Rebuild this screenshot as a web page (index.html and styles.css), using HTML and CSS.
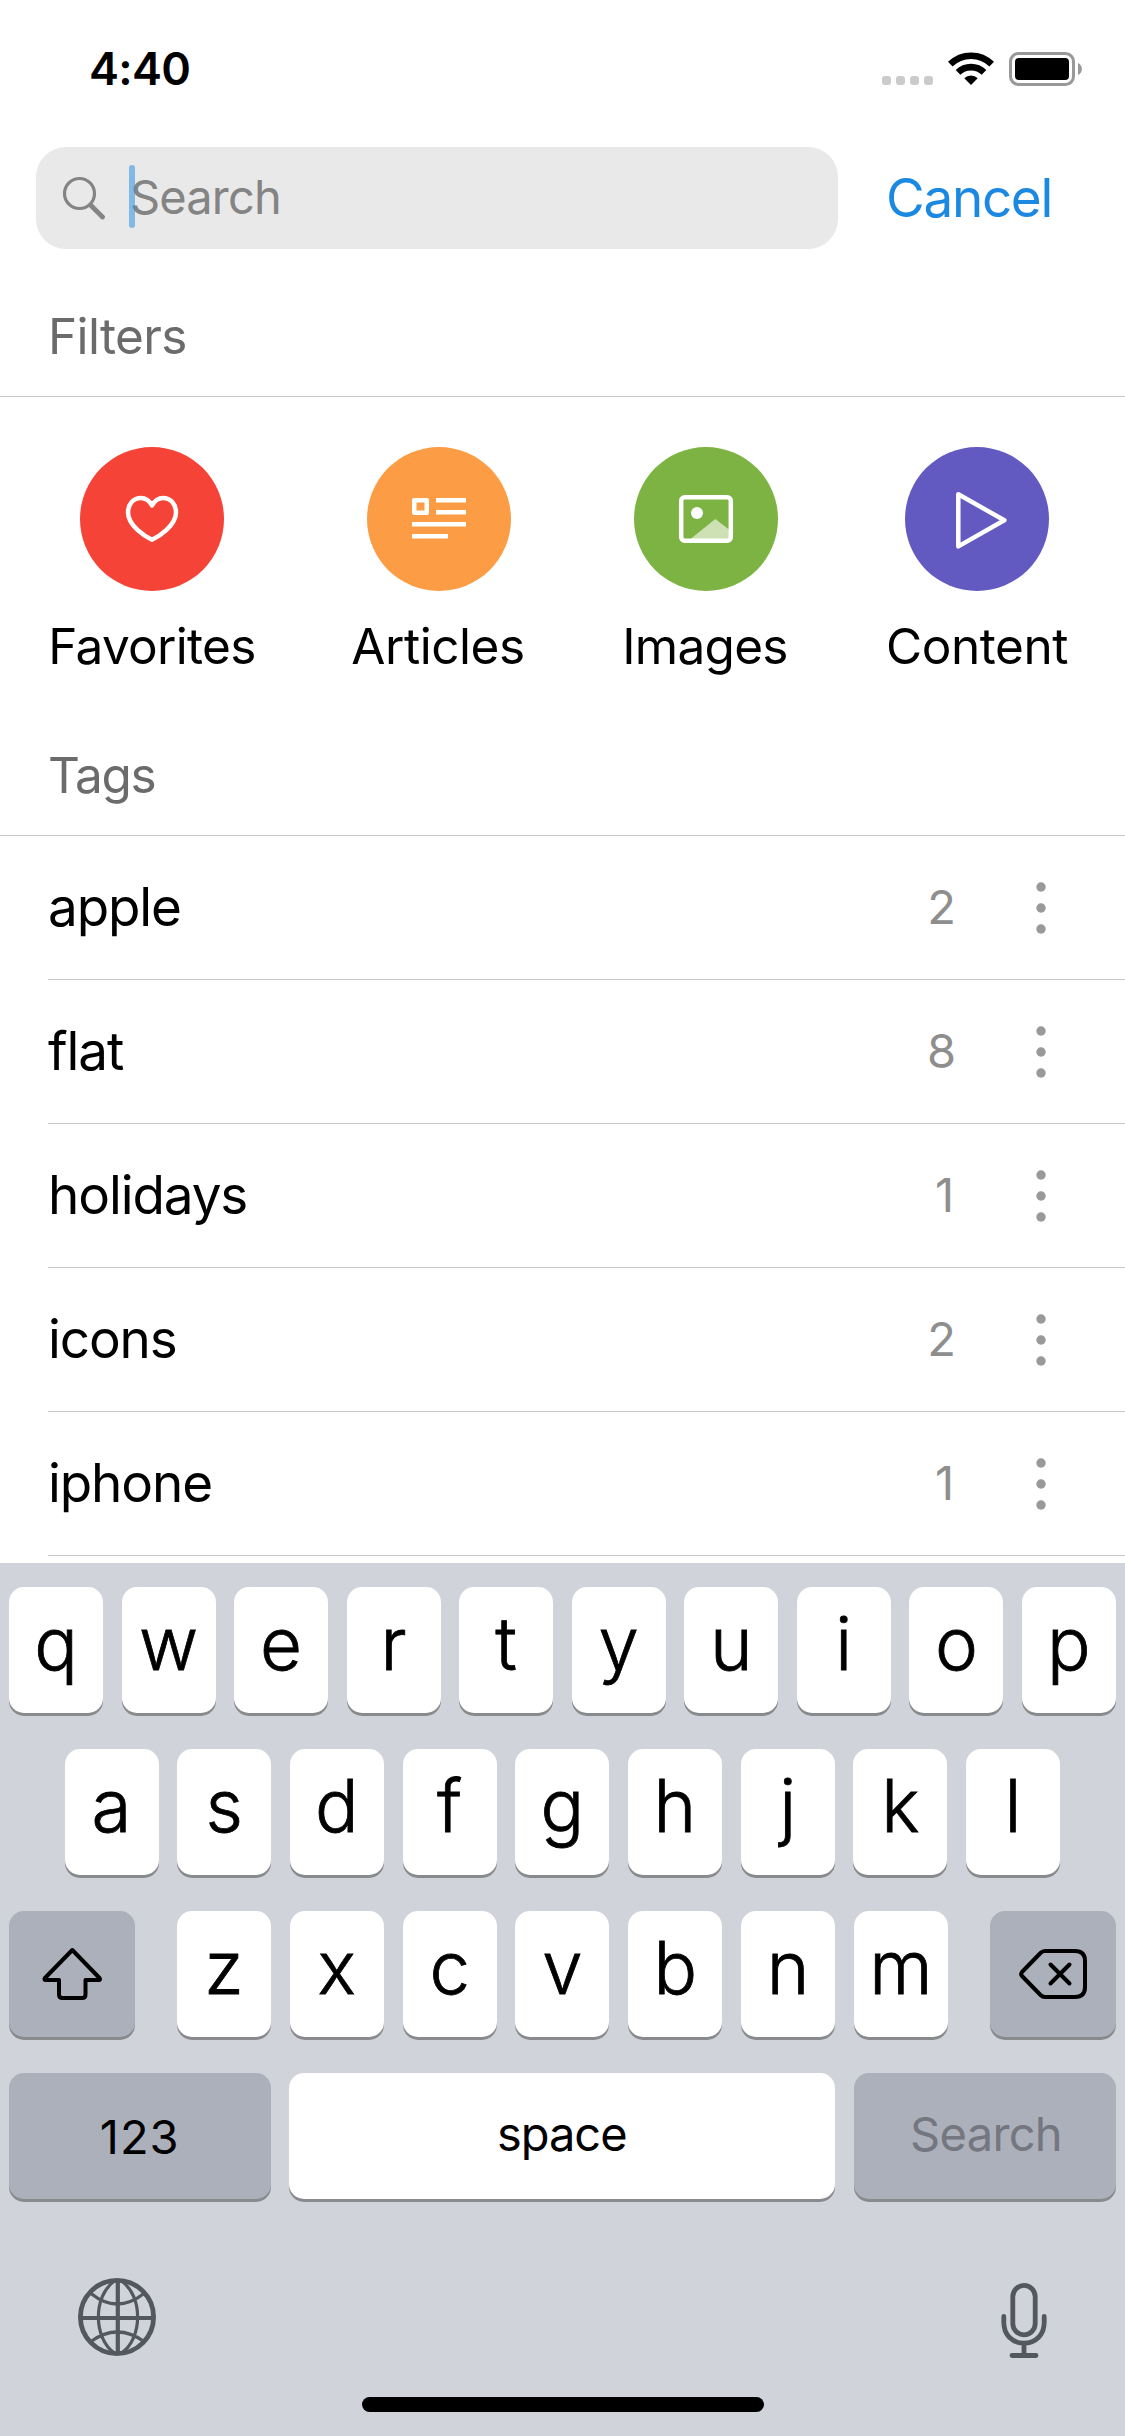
FILE: index.html
```html
<!DOCTYPE html>
<html lang="en">
<head>
<meta charset="utf-8">
<title>Search</title>
<link rel="stylesheet" href="styles.css">
</head>
<body>
<div class="screen">
  <main class="content">
    <header class="status">
      <span class="time">4:40</span>
      <svg class="status-icons" width="201" height="36" viewBox="0 0 201 36">
        <g fill="#cbcbcb">
          <rect x="0" y="25" width="9" height="9" rx="3"/>
          <rect x="14" y="25" width="9" height="9" rx="3"/>
          <rect x="28" y="25" width="9" height="9" rx="3"/>
          <rect x="42" y="25" width="9" height="9" rx="3"/>
        </g>
        <g fill="none" stroke="#000" stroke-width="6.600">
          <path d="M68.300 13.200a29.500 29.500 0 0 1 41.400 0"/>
          <path d="M76 21.400a18.600 18.600 0 0 1 26 0"/>
        </g>
        <path d="M82.300 27.300a9.500 9.500 0 0 1 13.400 0L89 34z"/>
        <rect x="128.500" y="2.500" width="63" height="31" rx="8" fill="none" stroke="#999" stroke-width="3"/>
        <rect x="133" y="7" width="54" height="22" rx="4"/>
        <path d="M196 12c5.200 2 5.200 10 0 12z" fill="#999"/>
      </svg>
    </header>

    <div class="search-row">
      <div class="search-box">
        <svg width="44" height="44" viewBox="0 0 44 44" fill="none" stroke="#848484" stroke-linecap="round">
          <circle cx="17.500" cy="17.500" r="15" stroke-width="3.200"/>
          <path d="M29 29.500 40.500 41" stroke-width="4.800"/>
        </svg>
        <span class="placeholder">Search</span>
      </div>
      <span class="cancel">Cancel</span>
    </div>

    <h2 class="section-title">Filters</h2>
    <div class="filters">
      <div class="filter favorites">
        <span class="disc"><svg width="144" height="144" viewBox="0 0 144 144" fill="none" stroke="#fff" stroke-width="4.500" stroke-linejoin="round"><path d="M72 92.800C66 90 48 79 48 65.500C48 57 53.500 51 61 51C66 51 69.500 54 72 58.500C74.500 54 78 51 83 51C90.500 51 96 57 96 65.500C96 79 78 90 72 92.800Z"/></svg></span>
        <span class="label">Favorites</span>
      </div>
      <div class="filter articles">
        <span class="disc"><svg width="144" height="144" viewBox="0 0 144 144" fill="#fff"><path fill-rule="evenodd" d="M47 51h13a2 2 0 0 1 2 2v13a2 2 0 0 1-2 2h-13a2 2 0 0 1-2-2v-13a2 2 0 0 1 2-2zM49.500 55.500v8h8v-8z"/><path d="M69 51h30v4.500H69zM69 63h30v4.500H69zM45 75h54v4.500H45zM45 87h36v4.500H45z"/></svg></span>
        <span class="label">Articles</span>
      </div>
      <div class="filter images">
        <span class="disc"><svg width="144" height="144" viewBox="0 0 144 144"><path d="M56.500 92 81.300 72 95 82.500V92z" fill="#cde1b5"/><rect x="47.200" y="50.200" width="49.600" height="43.600" rx="3.500" fill="none" stroke="#fff" stroke-width="4.500"/><circle cx="63" cy="66" r="6" fill="#fff"/></svg></span>
        <span class="label">Images</span>
      </div>
      <div class="filter videos">
        <span class="disc"><svg width="144" height="144" viewBox="0 0 144 144" fill="none" stroke="#fff" stroke-width="4.500" stroke-linejoin="round"><path d="M53.300 47.200 99.300 73.300 53.300 99.400Z"/></svg></span>
        <span class="label">Content</span>
      </div>
    </div>

    <h2 class="section-title tags-title">Tags</h2>
    <ul class="tags">
      <li class="tag"><span class="name">apple</span><span class="count">2</span><svg class="more" width="10" height="54" viewBox="0 0 10 54"><circle cx="5" cy="6" r="4.700"/><circle cx="5" cy="27" r="4.700"/><circle cx="5" cy="48" r="4.700"/></svg></li>
      <li class="tag"><span class="name">flat</span><span class="count">8</span><svg class="more" width="10" height="54" viewBox="0 0 10 54"><circle cx="5" cy="6" r="4.700"/><circle cx="5" cy="27" r="4.700"/><circle cx="5" cy="48" r="4.700"/></svg></li>
      <li class="tag"><span class="name">holidays</span><span class="count single">1</span><svg class="more" width="10" height="54" viewBox="0 0 10 54"><circle cx="5" cy="6" r="4.700"/><circle cx="5" cy="27" r="4.700"/><circle cx="5" cy="48" r="4.700"/></svg></li>
      <li class="tag"><span class="name">icons</span><span class="count">2</span><svg class="more" width="10" height="54" viewBox="0 0 10 54"><circle cx="5" cy="6" r="4.700"/><circle cx="5" cy="27" r="4.700"/><circle cx="5" cy="48" r="4.700"/></svg></li>
      <li class="tag"><span class="name">iphone</span><span class="count single">1</span><svg class="more" width="10" height="54" viewBox="0 0 10 54"><circle cx="5" cy="6" r="4.700"/><circle cx="5" cy="27" r="4.700"/><circle cx="5" cy="48" r="4.700"/></svg></li>
    </ul>
  </main>

  <section class="keyboard">
    <div class="keys">
      <div class="key-row"><span class="key">q</span><span class="key">w</span><span class="key">e</span><span class="key">r</span><span class="key">t</span><span class="key">y</span><span class="key">u</span><span class="key">i</span><span class="key">o</span><span class="key">p</span></div>
      <div class="key-row middle"><span class="key">a</span><span class="key">s</span><span class="key">d</span><span class="key">f</span><span class="key">g</span><span class="key">h</span><span class="key">j</span><span class="key">k</span><span class="key">l</span></div>
      <div class="key-row">
        <span class="key icon-key"><svg width="62" height="56" viewBox="0 0 62 56" fill="none" stroke="#000" stroke-width="4" stroke-linejoin="round"><path d="M31.300 4 4 32Q2.600 34 5 34H18V48.500Q18 52 21.500 52H41Q44.500 52 44.500 48.500V34H57.500Q60 34 58.500 32Z"/></svg></span>
        <div class="letters"><span class="key">z</span><span class="key">x</span><span class="key">c</span><span class="key">v</span><span class="key">b</span><span class="key">n</span><span class="key">m</span></div>
        <span class="key icon-key"><svg width="70" height="52" viewBox="0 0 70 52" fill="none" stroke="#000" stroke-width="4" stroke-linejoin="round" stroke-linecap="round"><path d="M27 3H57Q67 3 67 13V39Q67 49 57 49H27Q24.500 49 22.500 47L4 28Q2.300 26 4 24L22.500 5Q24.500 3 27 3Z"/><path d="M32.500 16.500 51.500 35.500M51.500 16.500 32.500 35.500"/></svg></span>
      </div>
      <div class="key-row"><span class="key word numbers">123</span><span class="key word space">space</span><span class="key word go">Search</span></div>
    </div>
    <div class="tools">
      <svg width="78" height="78" viewBox="0 0 78 78" fill="none" stroke="#53575e">
        <circle cx="39" cy="39" r="36.600" stroke-width="4.800"/>
        <path d="M39.800 2V76M2 40H76" stroke-width="4.200"/>
        <path d="M36.500 3C15 18 15 60 36.500 75M43.500 3C65 18 65 60 43.500 75M13 15.500Q39 36.500 66 15.500M13 63.500Q39 44.500 66 63.500" stroke-width="3.200"/>
      </svg>
      <svg class="mic" width="46" height="75" viewBox="0 0 46 75" fill="none" stroke="#53575e" stroke-width="4.800" stroke-linecap="round">
        <rect x="11.800" y="2.400" width="22.400" height="49.400" rx="11.200"/>
        <path d="M2.800 33.500V39.500C2.800 52 11.500 60.200 23 60.200S43.200 52 43.200 39.500V33.500M23 61V72.500M11 72.500H35"/>
      </svg>
    </div>
    <div class="home"></div>
  </section>
</div>
</body>
</html>
```
FILE: styles.css
```css
* { box-sizing: border-box; }

body {
  margin: 0;
  background: #fff;
  color: #000;
  font-family: Inter, "Liberation Sans", sans-serif;
}

svg { display: block; flex: none; }

.screen {
  width: 1125px;
  height: 2436px;
  overflow: hidden;
  display: flex;
  flex-direction: column;
}

.content {
  height: 1563px;
  flex: none;
}

/* Status bar */
.status {
  height: 137px;
  padding: 0 42px 0 89px;
  display: flex;
  justify-content: space-between;
  align-items: center;
}

.time {
  font-size: 45px;
  font-weight: 600;
  letter-spacing: -0.7px;
}

/* Search field */
.search-row {
  margin-top: 10px;
  padding: 0 36px;
  height: 102px;
  display: flex;
  align-items: center;
  gap: 48px;
}

.search-box {
  width: 802px;
  height: 102px;
  padding-left: 26px;
  border-radius: 30px;
  background: #e9e9e9;
  display: flex;
  align-items: center;
  gap: 23px;
}

.placeholder {
  position: relative;
  padding: 0 0 3px 1px;
  font-size: 47px;
  letter-spacing: -0.850px;
  color: #848484;
}

.placeholder::before {
  content: "";
  position: absolute;
  left: 0;
  top: -3px;
  width: 6px;
  height: 63px;
  border-radius: 3px;
  background: rgba(27, 136, 225, 0.5);
}

.cancel {
  font-size: 53px;
  letter-spacing: -1.300px;
  color: #1b88e2;
}

/* Sections */
.section-title {
  margin: 27px 0 0;
  padding-left: 48px;
  height: 121px;
  border-bottom: 1px solid #c8c8c8;
  font-size: 49.500px;
  font-weight: 400;
  line-height: 120px;
  letter-spacing: -0.650px;
  color: #6b6b6b;
}

.tags-title {
  margin-top: 0;
  letter-spacing: -1.300px;
}

.filters {
  height: 318px;
  padding: 50px 56px 0 48px;
  display: flex;
  justify-content: space-between;
}

.filter {
  display: flex;
  flex-direction: column;
  align-items: center;
  gap: 25px;
}

.favorites { width: 208px; }
.articles { width: 176px; }
.images { width: 168px; }
.videos { width: 184px; }

.disc {
  width: 144px;
  height: 144px;
  border-radius: 50%;
}

.favorites .disc { background: #f54337; }
.articles .disc { background: #fc9d46; }
.images .disc { background: #7db343; }
.videos .disc { background: #6259c1; }

.label {
  font-size: 49.500px;
  line-height: 60px;
  letter-spacing: -0.700px;
  white-space: nowrap;
}

.articles .label, .images .label { padding-right: 2px; }
.articles .label, .videos .label { letter-spacing: -0.450px; }

/* Tag list */
.tags {
  margin: 0 0 0 48px;
  padding: 0;
  list-style: none;
}

.tag {
  height: 144px;
  padding-right: 79px;
  border-bottom: 1px solid #c8c8c8;
  display: flex;
  align-items: center;
}

.name {
  flex: 1;
  padding-bottom: 1px;
  font-size: 53px;
  letter-spacing: -1.100px;
}

.count {
  margin-right: 80px;
  padding-bottom: 2px;
  font-size: 47px;
  color: #8e8e8e;
}

.single { padding-right: 2px; }

.more { fill: #999; }

/* Keyboard */
.keyboard {
  flex: 1;
  padding-top: 24px;
  background: #d0d3d9;
  display: flex;
  flex-direction: column;
}

.keys {
  padding: 0 9px;
  display: flex;
  flex-direction: column;
  gap: 36px;
}

.key-row, .letters {
  display: flex;
  justify-content: space-between;
}

.middle { padding: 0 56px 0 55.500px; }

.letters { width: 771px; }

.key {
  width: 94px;
  height: 126px;
  border-radius: 15px;
  background: #fff;
  box-shadow: 0 3px 0 #898a8d;
  font-size: 72.500px;
  font-weight: 300;
  line-height: 113px;
  text-align: center;
  -webkit-text-stroke: 0.8px #000;
}

.icon-key {
  width: 126px;
  background: #abb0ba;
  display: flex;
  align-items: center;
  justify-content: center;
}

.word {
  font-size: 47px;
  font-weight: 400;
  line-height: 121px;
  -webkit-text-stroke: 0;
}

.numbers {
  width: 261.500px;
  background: #abb0ba;
  line-height: 128px;
  letter-spacing: 1px;
}

.space {
  width: 546.500px;
  margin-right: 1px;
  letter-spacing: -1px;
}

.go {
  width: 262px;
  padding-left: 2px;
  background: #abb0ba;
  letter-spacing: -0.650px;
  color: #74777f;
}

.tools {
  margin-top: 79px;
  padding: 0 78px;
  display: flex;
  justify-content: space-between;
}

.mic { margin-top: 5px; }

.home {
  margin: 39px 0 0 362px;
  width: 402px;
  height: 15px;
  border-radius: 8px;
  background: #000;
}
```
